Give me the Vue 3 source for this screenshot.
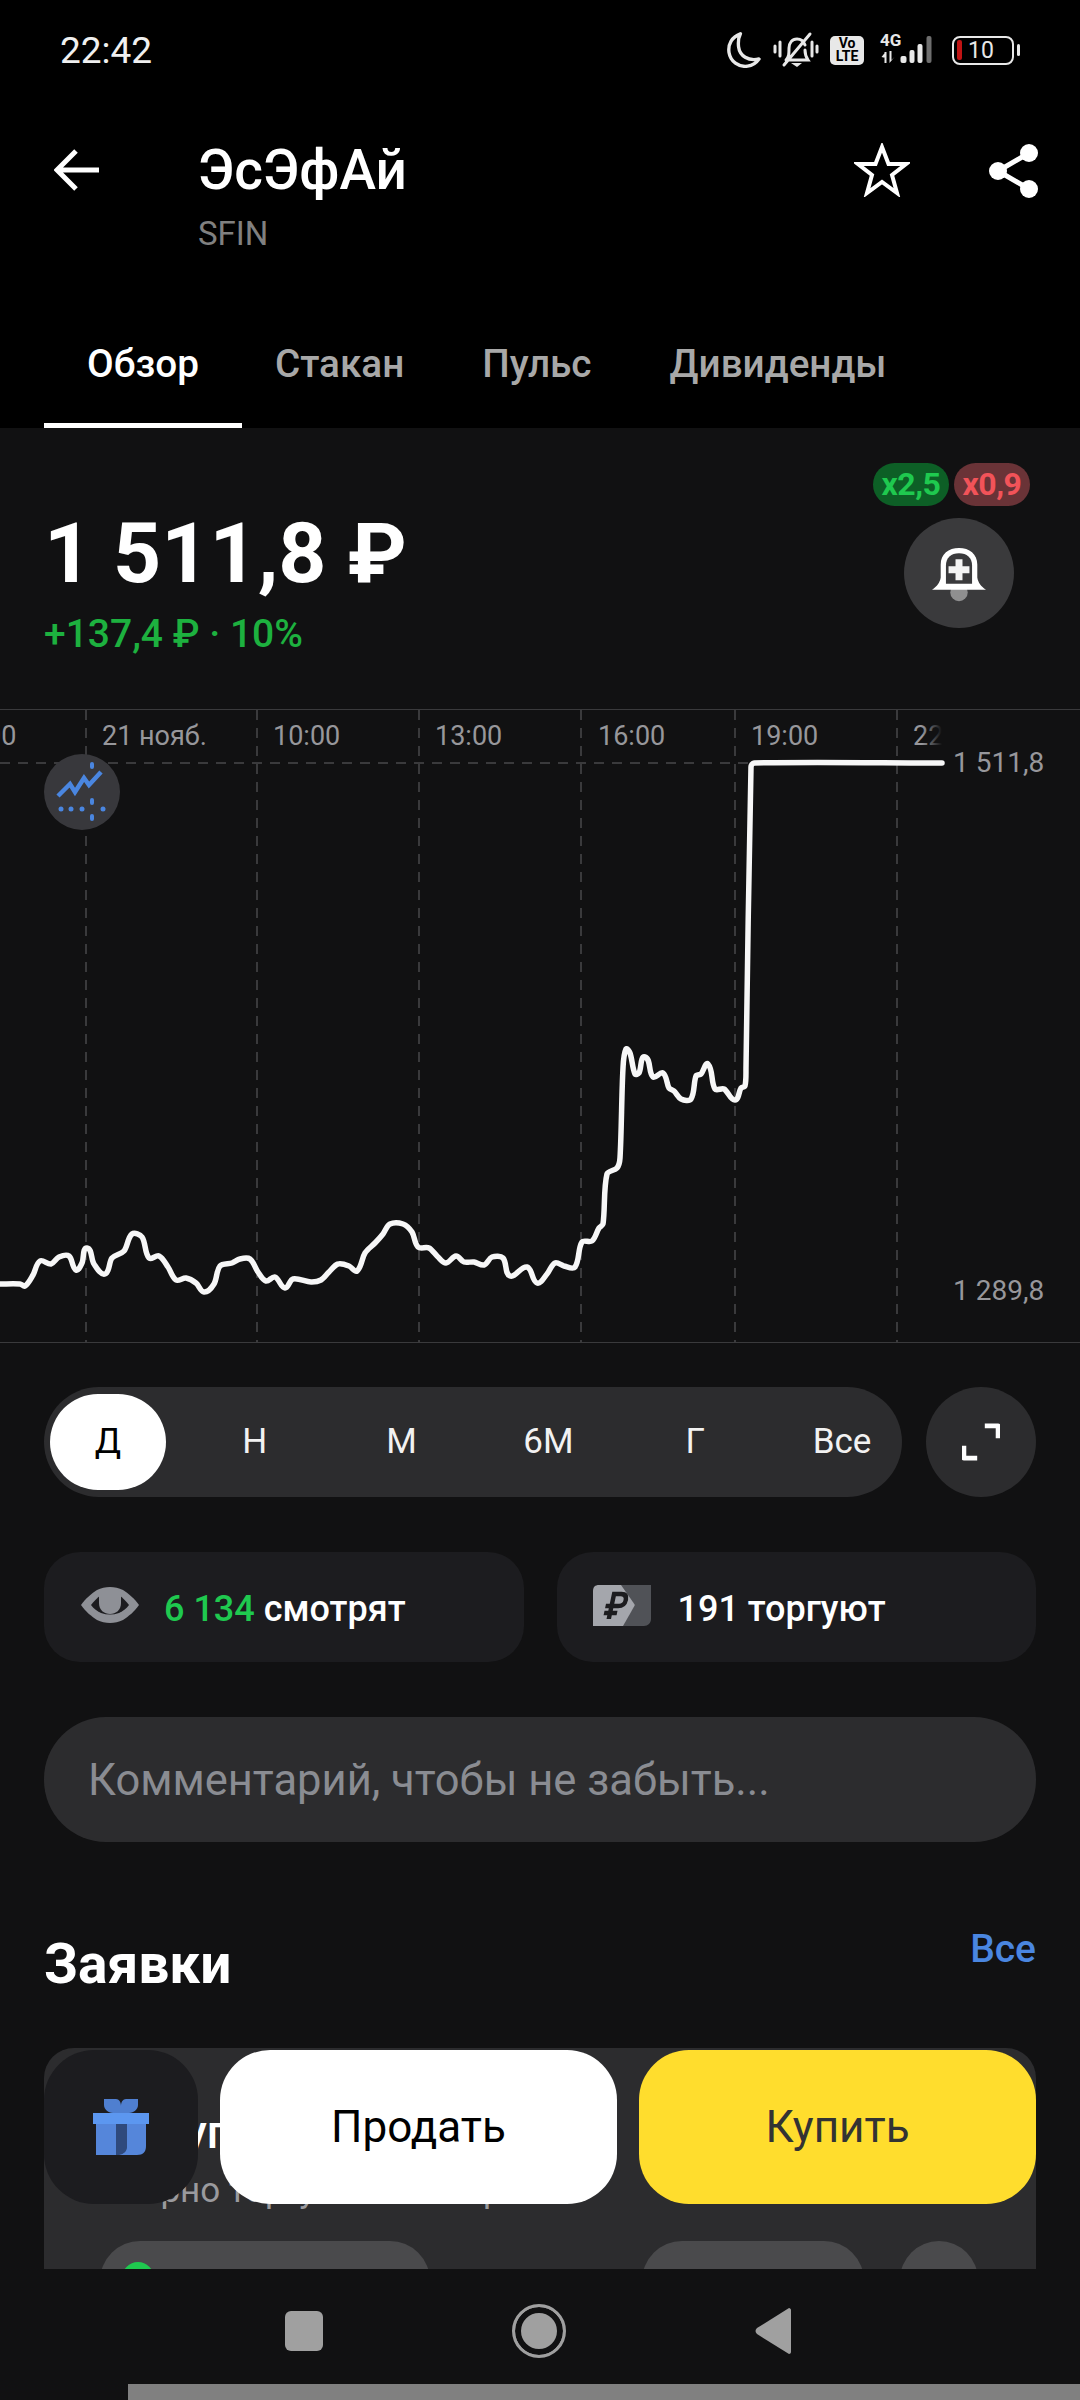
<template>
  <div class="screen">
    <div class="top">
      <div class="status">
        <span class="time">22:42</span>
        <div class="status-icons">
          <svg width="36" height="36" viewBox="3 2 28 30"><path d="M14 3.500C7 6 3.500 12 4.500 19c1.200 7.500 8 12.500 15.500 11.500 4-.5 7-2.500 9.500-6-9 2-16-2.500-17-10-.5-4 0-8 1.500-11z" fill="none" stroke="#e8e8e8" stroke-width="2.800" stroke-linejoin="round"/></svg>
          <svg width="46" height="38" viewBox="0 0 46 38"><g stroke="#e8e8e8" stroke-width="3" fill="none" stroke-linecap="round"><path d="M2 15v6M7 11v14M39 11v14M44 15v6"/><path d="M13 29c3-3 3-6 3-12 0-5 3-9 8-9s7 3 8 6M32 19c0 5 1 7 3 10H17M37 3 11 34"/></g><path d="M18 32h11l-5 4z" fill="#e8e8e8"/></svg>
          <div class="volte"><span>Vo</span><span>LTE</span></div>
          <div class="signal">
            <span class="net">4G</span>
            <svg width="64" height="30" viewBox="0 0 51 30"><g fill="#e8e8e8"><path d="M3 17h2v11H3zM0 22l4-5v6zM8 16h2v9l3-3-5 6z"/><rect x="19" y="21" width="6" height="7" rx="2"/><rect x="28" y="15" width="5" height="13" rx="2"/><rect x="36" y="9" width="5" height="19" rx="2"/></g><rect x="45" y="1" width="5" height="27" rx="2" fill="#6e6e6e"/></svg>
          </div>
          <div class="battery">
            <div class="battery-body"><i></i><span>10</span></div>
            <b></b>
          </div>
        </div>
      </div>
      <div class="head">
        <svg class="back" width="48" height="44" viewBox="0 0 48 44"><path d="M45 22H4M22 3 3 22l19 19" fill="none" stroke="#fff" stroke-width="5"/></svg>
        <div class="title-box">
          <div class="title">ЭсЭфАй</div>
          <div class="ticker">SFIN</div>
        </div>
        <svg class="star" width="56" height="54" viewBox="0 0 56 54"><path d="M28 4l6.500 17H52L38 32l5 18-15-11-15 11 5-18L4 21h17.500z" fill="none" stroke="#fff" stroke-width="4" stroke-linejoin="miter"/></svg>
        <svg class="share" width="52" height="56" viewBox="0 0 52 56"><g fill="#fff"><circle cx="41" cy="10" r="9"/><circle cx="41" cy="46" r="9"/><circle cx="10" cy="28" r="9"/></g><path d="M41 10 10 28l31 18" fill="none" stroke="#fff" stroke-width="5"/></svg>
      </div>
      <div class="tabs">
        <div v-for="(t, i) in tabs" :key="t" class="tab" :class="{ active: i === 0 }">{{ t }}</div>
      </div>
    </div>

    <div class="main">
      <div class="quote">
        <div class="price-box">
          <div class="price">1 511,8 ₽</div>
          <div class="change">+137,4 ₽ · 10%</div>
        </div>
        <div class="quote-right">
          <div class="badges">
            <span class="badge green">x2,5</span>
            <span class="badge red">x0,9</span>
          </div>
          <div class="bell">
            <svg width="54" height="58" viewBox="0 0 62 66">
              <circle cx="31" cy="53" r="10" fill="#8f8f90"/>
              <path d="M0 50c6-4 9-8 10-14V21C10 9 19 2 31 2s21 7 21 19v15c1 6 4 10 10 14z" fill="#fff"/>
              <path d="M16 43V22c0-9 6-14 15-14s15 5 15 14v21z" fill="#3a3a3c"/>
              <path d="M27 15h8v8h8v8h-8v8h-8v-8h-8v-8h8z" fill="#f4f4f4"/>
            </svg>
          </div>
        </div>
      </div>

      <div class="chart">
        <svg class="plot" width="1080" height="632" viewBox="0 709 1080 632">
          <defs>
            <linearGradient id="axis-fade" gradientUnits="userSpaceOnUse" x1="922" y1="0" x2="942" y2="0">
              <stop offset="0" stop-color="#97979b" />
              <stop offset="1" stop-color="#97979b" stop-opacity="0" />
            </linearGradient>
          </defs>
          <g stroke="#3a3a3c" stroke-width="2" stroke-dasharray="10 8">
            <path v-for="x in gridX" :key="x" :d="`M${x} 709V1341`" />
            <path d="M0 762H942" />
          </g>
          <path :d="linePath" fill="none" stroke="#f7f7f7" stroke-width="5.500" stroke-linejoin="round" stroke-linecap="round" />
          <g class="axis">
            <text x="-14" y="744">00</text>
            <text x="102" y="744">21 нояб.</text>
            <text x="273" y="744">10:00</text>
            <text x="435" y="744">13:00</text>
            <text x="598" y="744">16:00</text>
            <text x="751" y="744">19:00</text>
            <text x="913" y="744" class="fade">22</text>
            <text x="953" y="771" class="price-label">1 511,8</text>
            <text x="953" y="1299" class="price-label">1 289,8</text>
          </g>
        </svg>
        <div class="trend">
          <svg width="52" height="60" viewBox="0 0 52 60">
            <path d="M2 34 14 22l5 8 9-14 5 7 12-13" fill="none" stroke="#4a86e0" stroke-width="4.500"/>
            <g fill="#4a86e0">
              <rect x="34" y="0" width="4" height="7" rx="2"/>
              <rect x="34" y="36" width="4" height="7" rx="2"/>
              <rect x="34" y="52" width="4" height="7" rx="2"/>
              <circle cx="5" cy="47" r="2.500"/><circle cx="15" cy="47" r="2.500"/><circle cx="26" cy="47" r="2.500"/><circle cx="47" cy="47" r="2.500"/>
            </g>
          </svg>
        </div>
      </div>

      <div class="periods-row">
        <div class="periods">
          <div v-for="(p, i) in periods" :key="p" class="period" :class="{ on: i === 0 }">{{ p }}</div>
        </div>
        <div class="expand">
          <svg width="38" height="38" viewBox="0 0 40 40"><path d="M24 3h14v13M2 24v13h14" fill="none" stroke="#fff" stroke-width="5" stroke-linejoin="round"/></svg>
        </div>
      </div>

      <div class="stats">
        <div class="stat">
          <svg width="60" height="36" viewBox="0 0 60 36">
            <path d="M1 18C6 11 11 7 17 3c8-4 18-4 26 0 6 4 11 8 16 15-5 7-10 11-16 15-8 4-18 4-26 0C11 29 6 25 1 18z" fill="#8e9096"/>
            <path d="M11 18c3-4 6-7 10-10h18c4 3 7 6 10 10-3 4-6 6-10 8-6 2-12 2-18 0-4-2-7-4-10-8z" fill="#1c1c1f"/>
            <path d="M19 6h22v10c0 7-5 11-11 11s-11-4-11-11z" fill="#8e9096"/>
          </svg>
          <span><em>6 134</em> смотрят</span>
        </div>
        <div class="stat trade">
          <svg width="58" height="41" viewBox="0 0 58 41">
            <path d="M24 0h34v34c0 4-3 7-7 7H28l14-21z" fill="#505257"/>
            <path d="M6 0h22l14 20-12 21H0V6c0-4 2-6 6-6z" fill="#a4a6ac"/>
            <g fill="none" stroke="#1c1c1f" stroke-width="4.500" transform="skewX(-12) translate(6 0)">
              <path d="M17 34V9h7c4 0 6 2 6 6s-2 6-6 6H11M11 28h13"/>
            </g>
          </svg>
          <span>191 торгуют</span>
        </div>
      </div>

      <div class="comment">Комментарий, чтобы не забыть...</div>

      <div class="section-head">
        <h2>Заявки</h2>
        <span class="all">Все</span>
      </div>

      <div class="promo">
        <div class="promo-title">Покупка</div>
        <div class="promo-sub">Упорно торгуется на бирже</div>
        <div class="promo-row">
          <div class="promo-pill"><i></i><span>Включить</span></div>
          <div class="promo-right">
            <div class="promo-pill small"><span>Настроить</span></div>
            <div class="promo-round"></div>
          </div>
        </div>
      </div>

      <div class="actions">
        <div class="gift">
          <svg width="56" height="56" viewBox="0 0 56 56">
            <path d="M11 0h12c3 0 5 3 5 7 0-4 2-7 5-7h12v6c0 4-4 8-9 8H20c-5 0-9-4-9-8z" fill="#4f7fd0"/>
            <path d="M3 25h50v22c0 6-3 9-9 9H3z" fill="#5586da"/>
            <path d="M23 25h11v23c0 4-3 7-8 8h-3z" fill="#2f4a7d"/>
            <rect x="0" y="14" width="56" height="11" fill="#5c97f0"/>
          </svg>
        </div>
        <button class="act sell">Продать</button>
        <button class="act buy">Купить</button>
      </div>
    </div>

    <div class="nav">
      <div class="nav-icons">
        <div class="nav-square"></div>
        <div class="nav-circle"></div>
        <svg width="36" height="46" viewBox="0 0 36 46"><path d="M34 0c1 0 2 1 2 2v42c0 1-1 2-2 2L2 26c-2-2-2-4 0-6z" fill="#a0a0a0"/></svg>
      </div>
      <div class="scrollbar"></div>
    </div>
  </div>
</template>

<script setup>
const tabs = ['Обзор', 'Стакан', 'Пульс', 'Дивиденды']
const periods = ['Д', 'Н', 'М', '6М', 'Г', 'Все']
const gridX = [86, 257, 419, 581, 735, 897]

// traced from the day chart
const points = [
  [0, 1283], [20, 1283], [25, 1285], [33, 1274], [40, 1260], [51, 1263], [59, 1256], [69, 1255],
  [76, 1269], [82, 1262], [87, 1247], [94, 1263], [105, 1273], [112, 1257], [124, 1250], [132, 1233],
  [142, 1236], [149, 1257], [159, 1255], [168, 1266], [176, 1279], [186, 1277], [196, 1282], [204, 1291],
  [214, 1283], [220, 1265], [232, 1262], [240, 1258], [250, 1258], [258, 1271], [266, 1280], [275, 1276],
  [285, 1287], [293, 1278], [311, 1281], [321, 1279], [329, 1271], [338, 1263], [349, 1265], [357, 1270],
  [365, 1252], [375, 1242], [383, 1233], [390, 1223], [403, 1223], [412, 1231], [418, 1246], [429, 1247],
  [438, 1256], [446, 1262], [456, 1255], [464, 1261], [474, 1261], [484, 1264], [492, 1256], [503, 1257],
  [510, 1275], [527, 1266], [537, 1282], [547, 1273], [555, 1262], [564, 1265], [575, 1266], [582, 1241],
  [592, 1240], [599, 1227], [603, 1223], [607, 1173], [617, 1167], [620, 1157], [623, 1067], [626, 1048],
  [630, 1052], [635, 1073], [639, 1072], [645, 1056], [653, 1076], [663, 1072], [669, 1087], [674, 1090],
  [681, 1098], [691, 1098], [696, 1075], [701, 1073], [708, 1063], [715, 1088], [724, 1088], [735, 1099],
  [741, 1087], [745, 1085], [746, 1067], [751, 766], [754, 762], [942, 762]
]

const tangent = (i) => {
  const a = points[Math.max(i - 1, 0)]
  const b = points[Math.min(i + 1, points.length - 1)]
  const dx = b[0] - a[0]
  const dy = b[1] - a[1]
  const len = Math.hypot(dx, dy) || 1
  return [dx / len, dy / len]
}

// rounded line through the points, handle length follows the segment
const linePath = points.reduce((d, p, i) => {
  if (i === 0) return `M${p[0]} ${p[1]}`
  const prev = points[i - 1]
  const h = Math.hypot(p[0] - prev[0], p[1] - prev[1]) * 0.3
  const t0 = tangent(i - 1)
  const t1 = tangent(i)
  const c1 = [prev[0] + t0[0] * h, prev[1] + t0[1] * h]
  const c2 = [p[0] - t1[0] * h, p[1] - t1[1] * h]
  return `${d}C${c1[0].toFixed(1)} ${c1[1].toFixed(1)} ${c2[0].toFixed(1)} ${c2[1].toFixed(1)} ${p[0]} ${p[1]}`
}, '')
</script>

<style scoped>
.screen {
  width: 1080px;
  height: 2400px;
  display: flex;
  flex-direction: column;
  overflow: hidden;
  background: #111112;
  color: #fff;
  font-family: Roboto, "Noto Sans", sans-serif;
}

.top {
  height: 428px;
  background: #000;
  display: flex;
  flex-direction: column;
}

.status {
  height: 100px;
  display: flex;
  align-items: center;
  justify-content: space-between;
  padding: 0 60px 0 60px;
}

.time {
  font-size: 37px;
  color: #f0f0f0;
}

.status-icons {
  display: flex;
  align-items: center;
  gap: 11px;
}

.volte {
  width: 34px;
  height: 29px;
  background: #e8e8e8;
  border-radius: 5px;
  color: #000;
  font-size: 14px;
  font-weight: 700;
  line-height: 13px;
  display: flex;
  flex-direction: column;
  align-items: center;
  justify-content: center;
}

.signal {
  width: 64px;
  height: 30px;
  position: relative;
}

.signal svg {
  position: absolute;
  left: 0;
  bottom: 0;
}

.net {
  position: absolute;
  left: 5px;
  top: -3px;
  font-size: 17px;
  line-height: 17px;
  font-weight: 700;
  color: #e8e8e8;
}

.battery {
  display: flex;
  align-items: center;
  gap: 3px;
  margin-left: 2px;
}

.battery-body {
  width: 62px;
  height: 29px;
  box-sizing: border-box;
  border: 2.500px solid #e8e8e8;
  border-radius: 8px;
  display: flex;
  align-items: center;
  gap: 6px;
  padding-left: 3px;
  font-size: 23px;
  color: #e8e8e8;
}

.battery-body i {
  width: 5px;
  height: 20px;
  background: #c01414;
  border-radius: 2px;
}

.battery b {
  width: 3px;
  height: 12px;
  background: #e8e8e8;
  border-radius: 2px;
}

.head {
  height: 122px;
  display: flex;
  align-items: flex-start;
  padding: 20px 0 0 54px;
}

.back {
  margin-top: 28px;
}

.title-box {
  margin-left: 96px;
  flex: 1;
}

.title {
  font-size: 55px;
  font-weight: 500;
  line-height: 60px;
  margin-top: 20px;
}

.ticker {
  font-size: 33px;
  color: #808080;
  line-height: 36px;
  margin-top: 16px;
}

.star {
  margin-top: 23px;
  margin-right: 78px;
}

.share {
  margin-top: 23px;
  margin-right: 40px;
}

.tabs {
  margin-top: auto;
  height: 111px;
  display: flex;
  padding-left: 44px;
}

.tab {
  font-size: 38.700px;
  font-weight: 500;
  color: #a8a8a8;
  padding: 0 33px;
  margin-right: 12px;
  height: 106px;
  line-height: 84px;
  margin-top: 5px;
  box-sizing: border-box;
  white-space: nowrap;
}

.tab.active {
  color: #fff;
  padding: 0 43px;
  margin-right: 0;
  border-bottom: 5px solid #fff;
}

.main {
  flex: 1;
  position: relative;
  overflow: hidden;
  min-height: 0;
}

.quote {
  height: 281px;
  box-sizing: border-box;
  display: flex;
  justify-content: space-between;
  padding: 35px 44px 0 44px;
}

.price-box {
  padding-top: 44px;
}

.price {
  font-size: 84px;
  font-weight: 700;
  line-height: 94px;
  white-space: nowrap;
}

.change {
  font-size: 39px;
  font-weight: 500;
  line-height: 46px;
  color: #1db13f;
  margin-top: 10px;
}

.quote-right {
  display: flex;
  flex-direction: column;
  align-items: flex-end;
}

.badges {
  display: flex;
  gap: 5px;
  margin-right: 6px;
}

.badge {
  width: 76px;
  height: 43px;
  border-radius: 22px;
  font-size: 32px;
  font-weight: 700;
  line-height: 43px;
  text-align: center;
  letter-spacing: -0.5px;
}

.badge.green {
  background: #0d5f26;
  color: #1fc94f;
}

.badge.red {
  background: #6a3337;
  color: #f25359;
}

.bell {
  width: 110px;
  height: 110px;
  border-radius: 50%;
  background: #3a3a3c;
  margin-top: 12px;
  margin-right: 22px;
  display: flex;
  align-items: center;
  justify-content: center;
}

.bell svg {
  margin-top: 3px;
}

.chart {
  height: 634px;
  box-sizing: border-box;
  border-top: 1px solid #3a3a3c;
  border-bottom: 1px solid #3a3a3c;
  position: relative;
  overflow: hidden;
}

.plot {
  display: block;
}

.axis text {
  font-size: 27px;
  fill: #97979b;
}

.axis text.fade {
  fill: url(#axis-fade);
}

.axis text.price-label {
  font-size: 28px;
}

.trend {
  position: absolute;
  left: 44px;
  top: 44px;
  width: 76px;
  height: 76px;
  border-radius: 50%;
  background: #38383c;
  display: flex;
  align-items: center;
  justify-content: center;
}

.periods-row {
  display: flex;
  gap: 24px;
  margin: 44px 44px 0;
}

.periods {
  flex: 1;
  height: 110px;
  box-sizing: border-box;
  padding: 7px 2px 7px 6px;
  background: #2c2c2e;
  border-radius: 55px;
  display: flex;
  justify-content: space-between;
}

.period {
  width: 116px;
  height: 96px;
  border-radius: 48px;
  font-size: 35px;
  line-height: 96px;
  text-align: center;
  color: #f2f2f2;
}

.period.on {
  background: #fff;
  color: #000;
}

.expand {
  width: 110px;
  height: 110px;
  border-radius: 50%;
  background: #2c2c2e;
  display: flex;
  align-items: center;
  justify-content: center;
}

.stats {
  display: flex;
  gap: 33px;
  margin: 55px 44px 0;
}

.stat {
  flex: 1;
  height: 110px;
  border-radius: 36px;
  background: #1c1c1f;
  display: flex;
  align-items: center;
  gap: 24px;
  padding-left: 36px;
  padding-top: 4px;
  box-sizing: border-box;
  font-size: 36px;
  font-weight: 500;
}

.stat.trade {
  gap: 27px;
}

.stat svg {
  margin-top: -8px;
}

.stat em {
  font-style: normal;
  font-weight: 500;
  color: #1fc94f;
}

.comment {
  margin: 55px 44px 0;
  height: 125px;
  border-radius: 62px;
  background: #2c2c2e;
  padding-left: 44px;
  font-size: 43.500px;
  line-height: 127px;
  color: #8a8c92;
}

.section-head {
  display: flex;
  justify-content: space-between;
  align-items: flex-start;
  margin: 92px 44px 0;
  height: 114px;
}

.section-head h2 {
  margin: 0;
  font-size: 55px;
  font-weight: 700;
  line-height: 60px;
}

.all {
  font-size: 39px;
  font-weight: 500;
  color: #4a86e0;
  line-height: 44px;
  margin-top: -7px;
}

.promo {
  margin: 0 44px;
  height: 240px;
  border-radius: 30px 30px 0 0;
  background: #2c2c2e;
  padding: 57px 56px 0;
  box-sizing: border-box;
}

.promo-title {
  font-size: 46px;
  font-weight: 500;
  line-height: 54px;
  white-space: nowrap;
}

.promo-sub {
  font-size: 35px;
  line-height: 42px;
  margin-top: 11px;
  color: #9a9a9e;
  white-space: nowrap;
}

.promo-row {
  display: flex;
  justify-content: space-between;
  margin-top: 29px;
}

.promo-right {
  display: flex;
  gap: 36px;
  margin-right: 2px;
}

.promo-pill {
  width: 330px;
  height: 80px;
  border-radius: 40px;
  background: #4a4a4c;
  display: flex;
  padding: 21px 0 0 22px;
  box-sizing: border-box;
  gap: 14px;
  font-size: 32px;
  color: #1fc94f;
}

.promo-pill.small {
  width: 222px;
  color: #fff;
}

.promo-pill i {
  width: 32px;
  height: 32px;
  border-radius: 50%;
  background: #1fc94f;
}

.promo-round {
  width: 78px;
  height: 78px;
  border-radius: 50%;
  background: #4a4a4c;
}

.actions {
  position: absolute;
  left: 44px;
  right: 44px;
  top: 1622px;
  display: flex;
  gap: 22px;
}

.gift {
  width: 154px;
  height: 154px;
  border-radius: 50px;
  background: #1c1c1f;
  display: flex;
  align-items: center;
  justify-content: center;
}

.act {
  flex: 1;
  height: 154px;
  border: none;
  border-radius: 50px;
  font-family: inherit;
  font-size: 44px;
}

.sell {
  background: #fff;
  color: #000;
}

.buy {
  background: #ffdd2d;
  color: #333;
}

.nav {
  height: 131px;
  background: #111112;
  display: flex;
  flex-direction: column;
}

.nav-icons {
  height: 115px;
  display: flex;
  align-items: center;
  padding: 8px 0 0 285px;
  box-sizing: border-box;
}

.nav-square {
  width: 38px;
  height: 40px;
  border-radius: 6px;
  background: #a0a0a0;
}

.nav-circle {
  width: 54px;
  height: 54px;
  box-sizing: border-box;
  border-radius: 50%;
  background: #a0a0a0;
  border: 3px solid #a0a0a0;
  box-shadow: inset 0 0 0 6px #111112;
  margin: 0 0 0 189px;
}

.nav-icons svg {
  margin-left: 189px;
}

.scrollbar {
  height: 16px;
  margin-left: 128px;
  background: #808080;
}
</style>
